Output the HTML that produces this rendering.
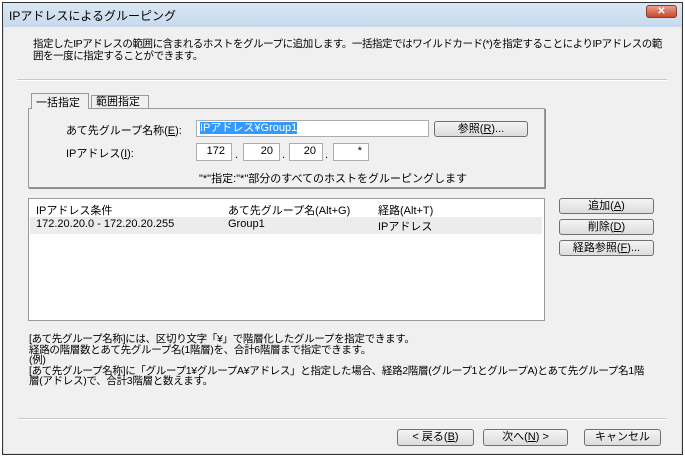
<!DOCTYPE html>
<html><head><meta charset="utf-8"><style>
*{margin:0;padding:0;box-sizing:border-box}
body{width:685px;height:459px;background:#fff;position:relative;overflow:hidden;font-family:"Liberation Sans","Noto Sans CJK JP",sans-serif;font-size:11px;color:#000}
.a{position:absolute;white-space:nowrap}
.win{position:absolute;left:2px;top:2px;width:681px;height:453px;border:1px solid #333;background:#f0f0f0;box-shadow:inset 0 0 0 1px #cfe0f0}
.title{position:absolute;left:3px;top:3px;width:679px;height:24px;background:linear-gradient(#dbe8f5,#c6d9ec)}
.btn{position:absolute;border:1px solid #707070;border-radius:3px;background:linear-gradient(#f4f4f4,#dcdcdc);text-align:center;line-height:14px;font-size:11px}
.inp{position:absolute;background:#fff;border:1px solid #abadb3;text-align:right;padding-right:6px;line-height:15px}
.sep{position:absolute;height:2px;border-top:1px solid #c8c8c8;border-bottom:1px solid #fff}
</style></head><body>
<div class="win"></div>
<div class="title"></div>
<div class="a" style="left:9px;top:7px;font-size:12px">IPアドレスによるグルーピング</div>
<div class="a" style="left:646px;top:5px;width:31px;height:13px;border:1px solid #8a3a2a;border-radius:3px;background:linear-gradient(#e8a08c,#c8482e);color:#fff;font-size:10px;font-weight:bold;text-align:center;line-height:11px">✕</div>
<div class="a" style="left:33px;top:38px;line-height:12px;font-size:10.5px;letter-spacing:-0.45px">指定したIPアドレスの範囲に含まれるホストをグループに追加します。一括指定ではワイルドカード(*)を指定することによりIPアドレスの範<br>囲を一度に指定することができます。</div>
<div class="sep" style="left:17px;top:79px;width:650px"></div>
<div class="a" style="left:28px;top:108px;width:517px;height:80px;border:1px solid #999;background:#f0f0f0;box-shadow:1px 1px 0 #888"></div>
<div class="a" style="left:31px;top:93px;width:58px;height:16px;border:1px solid #999;border-bottom:none;background:#f0f0f0;padding-left:4px">一括指定</div>
<div class="a" style="left:91px;top:95px;width:58px;height:13px;border:1px solid #999;border-bottom:none;padding-left:4px;line-height:13px">範囲指定</div>
<div class="a" style="left:66px;top:122px">あて先グループ名称(<u>E</u>):</div>
<div class="inp" style="left:196px;top:120px;width:233px;height:17px;text-align:left;padding-left:3px"><span style="background:#3399ff;color:#fff">IPアドレス¥Group1</span></div>
<div class="btn" style="left:434px;top:121px;width:94px;height:16px">参照(<u>R</u>)...</div>
<div class="a" style="left:66px;top:145px">IPアドレス(<u>I</u>):</div>
<div class="inp" style="left:196px;top:143px;width:36px;height:18px">172</div>
<div class="a" style="left:235px;top:149px">.</div>
<div class="inp" style="left:243px;top:143px;width:37px;height:18px">20</div>
<div class="a" style="left:282px;top:149px">.</div>
<div class="inp" style="left:289px;top:143px;width:34px;height:18px">20</div>
<div class="a" style="left:325px;top:149px">.</div>
<div class="inp" style="left:333px;top:143px;width:36px;height:18px">*</div>
<div class="a" style="left:199px;top:170px">"*"指定:"*"部分のすべてのホストをグルーピングします</div>
<div class="a" style="left:28px;top:198px;width:517px;height:123px;border:1px solid #999;background:#fff"></div>
<div class="a" style="left:36px;top:202px">IPアドレス条件</div>
<div class="a" style="left:228px;top:202px">あて先グループ名(Alt+G)</div>
<div class="a" style="left:378px;top:202px">経路(Alt+T)</div>
<div class="a" style="left:30px;top:217px;width:512px;height:17px;background:#ececec"></div>
<div class="a" style="left:36px;top:218px">172.20.20.0 - 172.20.20.255</div>
<div class="a" style="left:228px;top:218px">Group1</div>
<div class="a" style="left:378px;top:218px">IPアドレス</div>
<div class="btn" style="left:559px;top:198px;width:95px;height:16px">追加(<u>A</u>)</div>
<div class="btn" style="left:559px;top:219px;width:95px;height:16px">削除(<u>D</u>)</div>
<div class="btn" style="left:559px;top:240px;width:95px;height:16px">経路参照(<u>F</u>)...</div>
<div class="a" style="left:29px;top:334px;line-height:10.6px;font-size:10.5px;letter-spacing:-0.3px">[あて先グループ名称]には、区切り文字「¥」で階層化したグループを指定できます。<br>経路の階層数とあて先グループ名(1階層)を、合計6階層まで指定できます。<br>(例)<br>[あて先グループ名称]に「グループ1¥グループA¥アドレス」と指定した場合、経路2階層(グループ1とグループA)とあて先グループ名1階<br>層(アドレス)で、合計3階層と数えます。</div>
<div class="sep" style="left:17px;top:418px;width:650px"></div>
<div class="btn" style="left:397px;top:429px;width:77px;height:17px">&lt; 戻る(<u>B</u>)</div>
<div class="btn" style="left:483px;top:429px;width:85px;height:17px;border-color:#3c7fb1">次へ(<u>N</u>) &gt;</div>
<div class="btn" style="left:584px;top:429px;width:77px;height:17px">キャンセル</div>
</body></html>
